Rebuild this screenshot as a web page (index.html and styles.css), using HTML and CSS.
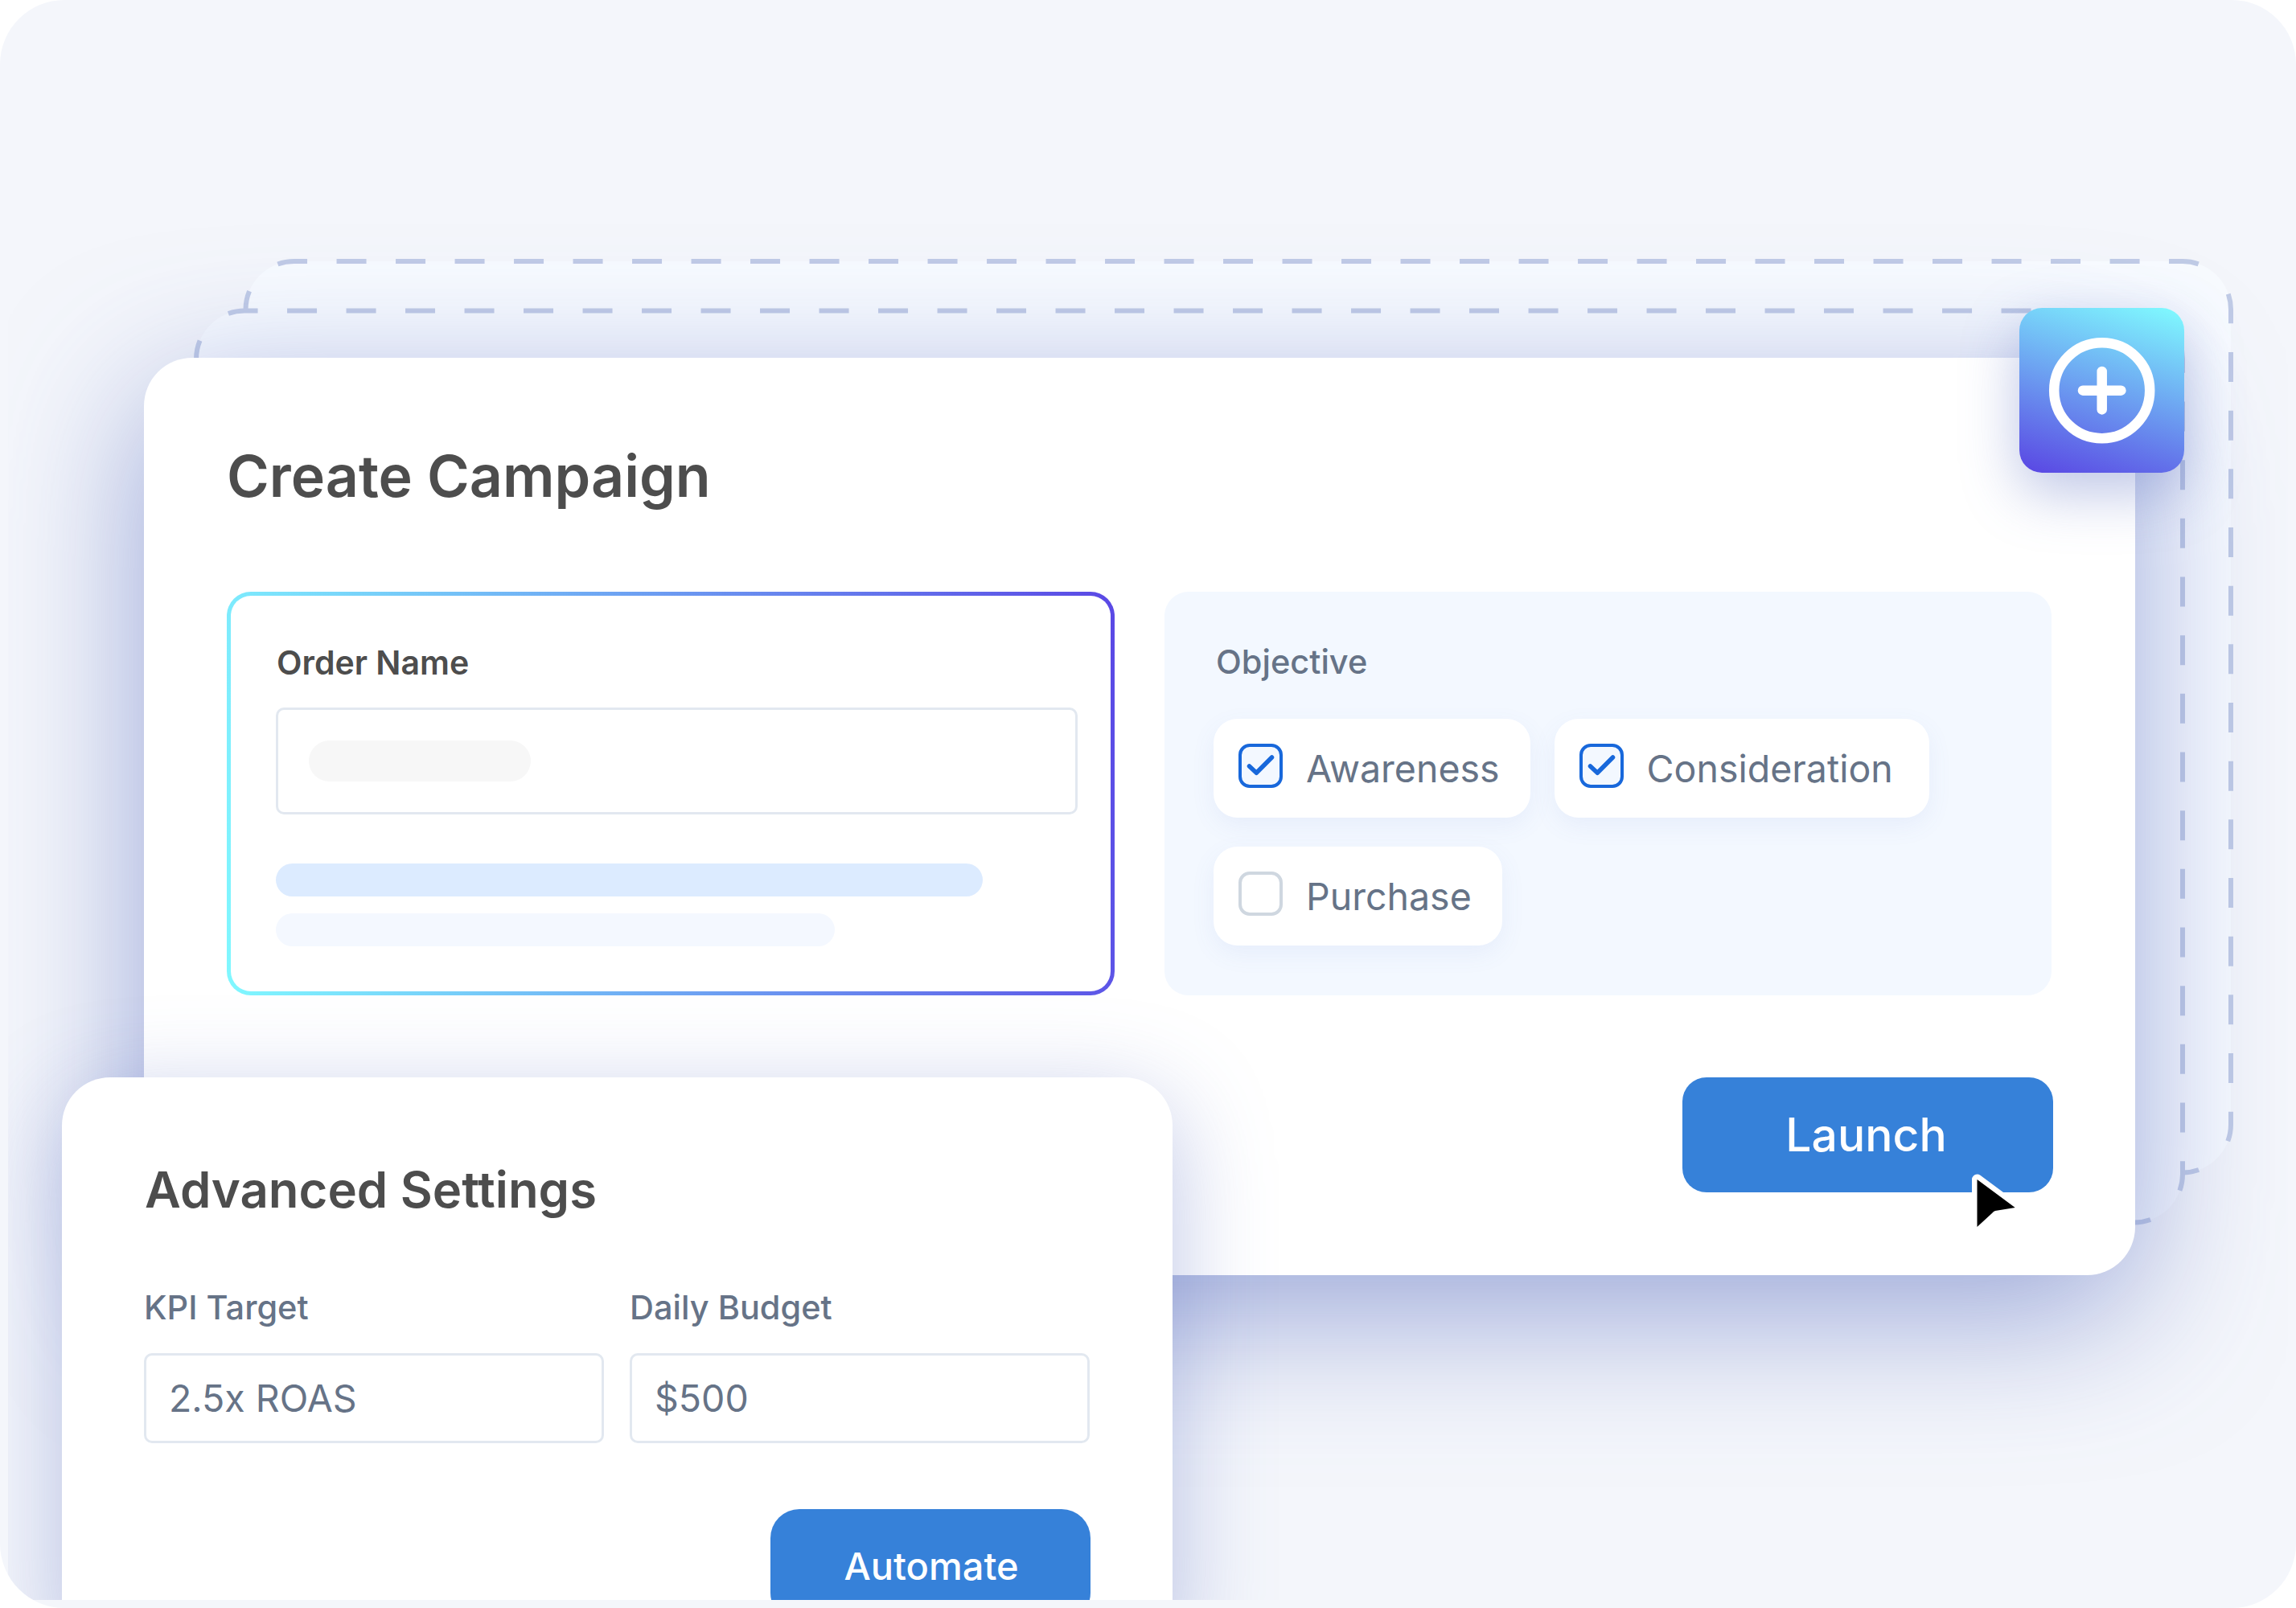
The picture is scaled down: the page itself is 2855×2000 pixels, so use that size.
FILE: index.html
```html
<!DOCTYPE html>
<html lang="en">
<head>
<meta charset="utf-8">
<title>Create Campaign</title>
<link rel="stylesheet" href="styles.css">
</head>
<body>
<div class="frame">
  <div class="stage">
    <svg class="ghost ghost-back" width="2480" height="1150" viewBox="302 322 2480 1150">
      <rect x="305.500" y="325" width="2468.500" height="1133.500" rx="60" ry="60"/>
      <path class="dash-h" d="M323.070 342.570A60 60 0 0 1 365.500 325H2714A60 60 0 0 1 2756.430 342.570"/>
      <path class="dash-v" d="M2756.430 342.570A60 60 0 0 1 2774 385V1398.500A60 60 0 0 1 2756.430 1440.930"/>
      <path class="dash-h" d="M2756.430 1440.930A60 60 0 0 1 2714 1458.500H365.500"/>
      <path class="dash-l" d="M323.070 342.570A60 60 0 0 0 305.500 385V1398.500"/>
    </svg>
    <svg class="ghost ghost-front" width="2480" height="1150" viewBox="241 383 2480 1150">
      <rect x="244" y="386.500" width="2470" height="1134" rx="60" ry="60"/>
      <path class="dash-h" d="M261.570 404.070A60 60 0 0 1 304 386.500H2654A60 60 0 0 1 2696.430 404.070"/>
      <path class="dash-v" d="M2696.430 404.070A60 60 0 0 1 2714 446.500V1460.500A60 60 0 0 1 2696.430 1502.930"/>
      <path class="dash-h" d="M2696.430 1502.930A60 60 0 0 1 2654 1520.500H304"/>
      <path class="dash-l" d="M261.570 404.070A60 60 0 0 0 244 446.500V1460.500"/>
    </svg>

    <main class="card-main">
      <h1 class="title">Create Campaign</h1>
      <div class="columns">
        <section class="name-card">
          <div class="label label-dark">Order Name</div>
          <div class="field field-tall"><span class="pill"></span></div>
          <div class="bar bar-blue"></div>
          <div class="bar bar-pale"></div>
        </section>
        <section class="objective">
          <div class="label label-muted">Objective</div>
          <div class="chips">
            <div class="chip">
              <span class="check check-on"><svg viewBox="0 0 47 47" width="47" height="47"><path d="M9.500 24 18.300 32.300 37.500 13"/></svg></span>
              <span class="chip-text">Awareness</span>
            </div>
            <div class="chip chip-wide">
              <span class="check check-on"><svg viewBox="0 0 47 47" width="47" height="47"><path d="M9.500 24 18.300 32.300 37.500 13"/></svg></span>
              <span class="chip-text">Consideration</span>
            </div>
            <div class="chip">
              <span class="check"></span>
              <span class="chip-text">Purchase</span>
            </div>
          </div>
        </section>
      </div>
      <div class="actions">
        <button class="btn btn-launch" type="button">Launch</button>
      </div>

      <div class="add-tile">
        <svg viewBox="0 0 205 205" width="205" height="205">
          <circle cx="102.700" cy="102.700" r="59.500"/>
          <path d="M102.700 78.950V126.450M78.950 102.700H126.450"/>
        </svg>
      </div>
      <svg class="cursor" viewBox="0 0 80 90" width="80" height="90"><path d="M18.500 17 65.700 52 41 56Q39 56.500 37 59L18.500 76Z"/></svg>
    </main>

    <aside class="card-adv">
      <h2 class="subtitle">Advanced Settings</h2>
      <div class="fields">
        <div>
          <div class="label label-muted">KPI Target</div>
          <div class="field field-short">2.5x ROAS</div>
        </div>
        <div>
          <div class="label label-muted">Daily Budget</div>
          <div class="field field-short">$500</div>
        </div>
      </div>
      <div class="actions actions-adv">
        <button class="btn btn-auto" type="button">Automate</button>
      </div>
    </aside>
  </div>
</div>
</body>
</html>
```
FILE: styles.css
```css
* { box-sizing: border-box; }
html, body { margin: 0; padding: 0; background: #fff; }
body { font-family: Inter, "Liberation Sans", sans-serif; }

.frame {
  width: 2855px;
  height: 2000px;
  padding: 10px;
  background: #f4f6fb;
  border-radius: 80px;
  overflow: hidden;
}
.stage {
  position: relative;
  width: 100%;
  height: 100%;
  border-radius: 30px;
  overflow: hidden;
}

/* dashed sheets behind the main card */
.ghost { position: absolute; overflow: visible; }
.ghost rect { fill: #f8fbff; }
.ghost path {
  fill: none;
  stroke: #c0cbe6;
  stroke-width: 6;
}
.ghost .dash-h { stroke-dasharray: 37 36.5; stroke-dashoffset: 46.9; }
.ghost .dash-v { stroke-dasharray: 37 35.67; stroke-dashoffset: 45.3; }
.ghost .dash-l { stroke-dasharray: 37 36.5; stroke-dashoffset: 49.9; }
.ghost-back { left: 292px; top: 312px; }
.ghost-front { left: 231px; top: 373px; }

/* main card */
.card-main {
  position: absolute;
  left: 169px;
  top: 435px;
  width: 2476px;
  height: 1141px;
  padding: 99px 104px 0 103px;
  background: #fff;
  border-radius: 60px;
  box-shadow: 0 48px 180px rgba(91, 111, 192, .6);
}
.title {
  margin: 0 0 96px;
  font-size: 71.7px;
  line-height: 96px;
  font-weight: 600;
  color: #4d4d4d;
}
.columns {
  display: grid;
  grid-template-columns: 1104px 1103px;
  column-gap: 62px;
  height: 502px;
}

.label {
  font-size: 41px;
  line-height: 48px;
  font-weight: 500;
}
.label-dark { font-weight: 600; color: #4d4d4d; }
.label-muted { font-size: 41.5px; color: #667387; }

.name-card {
  padding: 59px 40px 0 56px;
  border: 5px solid transparent;
  border-radius: 30px;
  background:
    linear-gradient(#fff, #fff) padding-box,
    linear-gradient(80deg, #80f8ff 0%, #5a48e5 100%) border-box;
}
.name-card .label { padding-left: 1px; }
.field {
  background: #fff;
  border: 3px solid #e2e8f0;
  border-radius: 10px;
}
.field-tall {
  display: flex;
  align-items: center;
  width: 997px;
  height: 133px;
  margin-top: 32px;
  padding-left: 38px;
}
.pill {
  width: 276px;
  height: 51px;
  border-radius: 26px;
  background: #f7f7f7;
}
.bar { height: 41px; border-radius: 21px; }
.bar-blue { width: 879px; margin-top: 61px; background: #dcebff; }
.bar-pale { width: 695px; margin-top: 21px; background: #f4f8ff; }

.objective {
  padding: 63px 60px 0 61px;
  border-radius: 30px;
  background: #f3f8ff;
}
.objective .label { padding-left: 3px; }
.chips {
  display: flex;
  flex-wrap: wrap;
  gap: 36px 30px;
  margin-top: 47px;
}
.chip {
  display: flex;
  align-items: center;
  gap: 29px;
  height: 123px;
  padding: 0 38px 0 31px;
  border-radius: 30px;
  background: #fff;
  box-shadow: 0 10px 30px rgba(90, 120, 200, .08);
}
.chip-wide { padding-right: 45px; }
.chip-text {
  font-size: 46.5px;
  line-height: 52px;
  color: #667387;
}
.check {
  width: 55px;
  height: 55px;
  margin-top: -6px;
  border: 4px solid #cfd7e0;
  border-radius: 14px;
  background: #fff;
}
.check svg { display: block; }
.check-on { border-color: #1868db; background: #f3f8ff; }
.check path {
  fill: none;
  stroke: #1868db;
  stroke-width: 5.500;
  stroke-linecap: round;
  stroke-linejoin: round;
}

.actions { display: flex; justify-content: flex-end; margin: 102px -2px 0 0; }
.btn {
  display: block;
  border: 0;
  padding: 0;
  color: #fff;
  background: #3681d9;
  font-family: inherit;
  font-weight: 500;
  cursor: pointer;
}
.btn-launch { width: 461px; height: 143px; padding-right: 4px; border-radius: 30px; font-size: 57px; }
.btn-auto { width: 398px; height: 140px; padding-left: 2px; border-radius: 36px; font-size: 47px; }

/* overlays on the main card */
.add-tile {
  position: absolute;
  right: -61px;
  top: -62px;
  width: 205px;
  height: 205px;
  border-radius: 28px;
  background: linear-gradient(197deg, #80fcff 0%, #5945e3 100%);
  box-shadow: 0 24px 70px rgba(91, 111, 192, .4);
}
.add-tile svg { display: block; }
.add-tile circle, .add-tile path {
  fill: none;
  stroke: #fff;
  stroke-width: 12.5;
  stroke-linecap: round;
}
.cursor {
  position: absolute;
  left: 2261px;
  top: 1005px;
}
.cursor path {
  fill: #000;
  stroke: #fff;
  stroke-width: 13;
  stroke-linejoin: round;
  paint-order: stroke;
}

/* advanced settings card */
.card-adv {
  position: absolute;
  left: 67px;
  top: 1330px;
  width: 1381px;
  height: 720px;
  padding: 100px 102px 0 102px;
  background: #fff;
  border-radius: 60px;
  box-shadow: 0 30px 120px rgba(91, 111, 192, .4);
}
.subtitle {
  margin: 0 0 82px 1px;
  font-size: 61.6px;
  line-height: 80px;
  font-weight: 600;
  color: #4d4d4d;
}
.fields {
  display: grid;
  grid-template-columns: 572px 572px;
  column-gap: 32px;
}
.field-short {
  height: 112px;
  margin-top: 33px;
  padding-left: 28px;
  font-size: 46.5px;
  line-height: 106px;
  color: #667387;
}
.actions-adv { margin: 82px 0 0; }
```
